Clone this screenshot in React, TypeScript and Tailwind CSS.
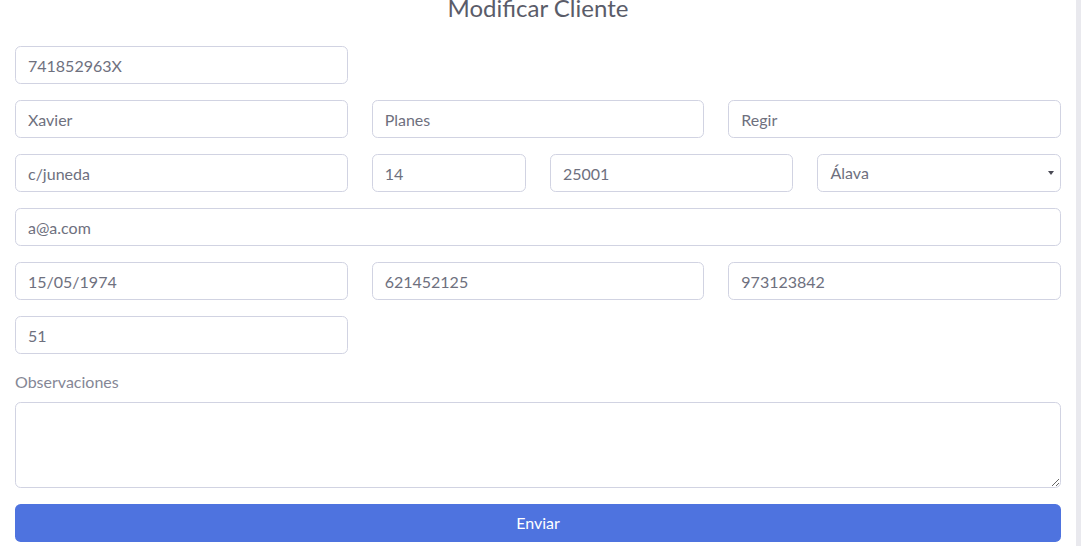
import React from "react";

const inputCls =
  "block w-full h-[38px] px-3 border border-[#d1d3e2] rounded-[5.6px] bg-white text-[16px] text-[#6e707e] outline-none";

function Field({ value, span }: { value: string; span: string }) {
  return (
    <div className={span}>
      <input className={inputCls} defaultValue={value} />
    </div>
  );
}

export default function App() {
  return (
    <div
      className="flex w-[1081px] h-[546px] overflow-hidden bg-white"
      style={{ fontFamily: "Lato, 'Noto Sans', sans-serif" }}
    >
      <div className="w-[1076px] px-[15px]">
        <h3 className="mt-[-9px] mb-[22px] text-center text-[24px] leading-[33px] text-[#5a5c69]">
          Modificar Cliente
        </h3>
        <div className="grid grid-cols-12 gap-x-6 gap-y-4">
          <Field span="col-span-4" value="741852963X" />
          <div className="col-span-8" />
          <Field span="col-span-4" value="Xavier" />
          <Field span="col-span-4" value="Planes" />
          <Field span="col-span-4" value="Regir" />
          <Field span="col-span-4" value="c/juneda" />
          <Field span="col-span-2" value="14" />
          <Field span="col-span-3" value="25001" />
          <div className="col-span-3 relative">
            <select
              className={inputCls + " appearance-none pr-8"}
              defaultValue="Álava"
            >
              <option>Álava</option>
            </select>
            <svg
              className="absolute right-[6px] top-[16px]"
              width="8"
              height="6"
              viewBox="0 0 8 6"
            >
              <path d="M1 1h6L4 5z" fill="#4a4a55" />
            </svg>
          </div>
          <Field span="col-span-12" value="a@a.com" />
          <Field span="col-span-4" value="15/05/1974" />
          <Field span="col-span-4" value="621452125" />
          <Field span="col-span-4" value="973123842" />
          <Field span="col-span-4" value="51" />
        </div>
        <div className="mt-4">
          <label className="block h-6 leading-6 mb-2 text-[16px] text-[#858796]">
            Observaciones
          </label>
          <textarea className="block w-full h-[86px] px-3 py-1.5 border border-[#d1d3e2] rounded-[5.6px] text-[16px] text-[#6e707e] outline-none" />
        </div>
        <button className="mt-4 block w-full h-[38px] rounded-[5.6px] bg-[#4e73df] text-white text-[16px]">
          Enviar
        </button>
      </div>
      <div className="flex-1 bg-[#e9e9ee]" />
    </div>
  );
}
